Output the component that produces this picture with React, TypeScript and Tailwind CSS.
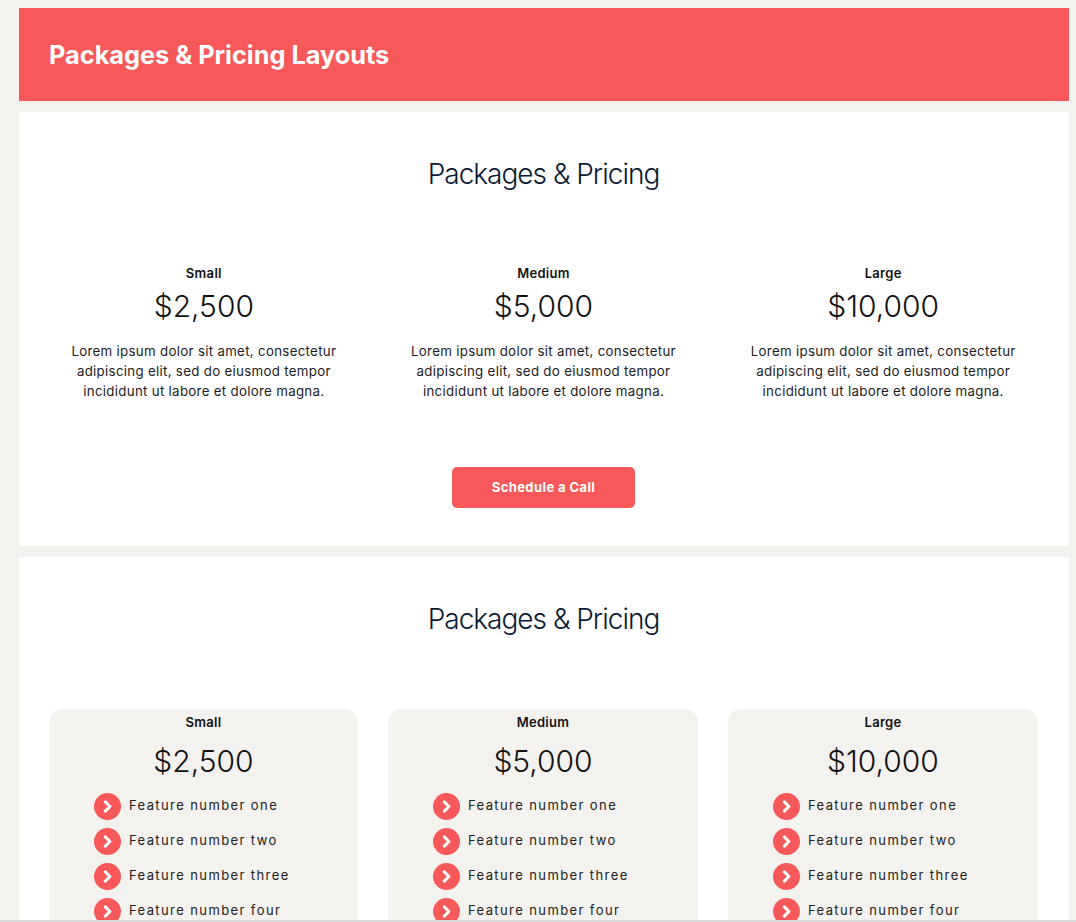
import React from 'react';

const tiers = [
  { name: 'Small', price: '$2,500' },
  { name: 'Medium', price: '$5,000' },
  { name: 'Large', price: '$10,000' },
];

const features = ['Feature number one', 'Feature number two', 'Feature number three', 'Feature number four'];

const Chevron: React.FC = () => (
  <span className="flex h-[27px] w-[27px] shrink-0 items-center justify-center rounded-full bg-[#f7595b]">
    <svg className="h-[13px] w-[13px]" viewBox="0 0 24 24" fill="none" stroke="#ffffff" strokeWidth="5.5" aria-hidden="true">
      <path strokeLinecap="round" strokeLinejoin="round" d="M8 3.5l8.5 8.5L8 20.5" />
    </svg>
  </span>
);

const SectionTitle: React.FC = () => (
  <h2 className="text-center font-['Inter',sans-serif] text-[28px] font-light leading-[40px] tracking-[-1px] text-[#0b1a33]">
    Packages &amp; Pricing
  </h2>
);

const App: React.FC = () => {
  return (
    <div className="flex h-[922px] flex-col overflow-hidden border-b-2 border-[#d9d9d9] bg-[#f4f2ee] pl-[19px] pr-[7px] pt-2 font-['Inter',sans-serif] text-[#111111]">
      {/* Banner */}
      <header className="flex h-[93px] shrink-0 items-center bg-[#f7595b] px-[30px]">
        <h1 className="text-[25.3px] font-bold leading-none text-white">Packages &amp; Pricing Layouts</h1>
      </header>

      {/* Plain layout */}
      <section className="mt-[11px] h-[434px] shrink-0 bg-white pl-[30px] pr-[31px] pt-[42px]">
        <SectionTitle />
        <div className="mt-[69px] grid grid-cols-3 gap-[30px]">
          {tiers.map((tier) => (
            <div key={tier.name} className="text-center">
              <div className="text-[13px] font-semibold leading-5 tracking-[0.3px]">{tier.name}</div>
              <div className="mt-[3px] text-[30px] font-light leading-[40px]">{tier.price}</div>
              <p className="mx-auto mt-[15px] w-[290px] text-[13.3px] leading-5 tracking-[0.3px] text-[#1c1c24]">
                Lorem ipsum dolor sit amet, consectetur adipiscing elit, sed do eiusmod tempor incididunt ut labore et dolore magna.
              </p>
            </div>
          ))}
        </div>
        <div className="mt-[66px] flex justify-center">
          <button className="h-[41px] w-[183px] rounded-[5px] bg-[#f7595b] text-[13px] font-bold tracking-[0.4px] text-white">
            Schedule a Call
          </button>
        </div>
      </section>

      {/* Card layout */}
      <section className="mt-[11px] min-h-0 flex-1 overflow-hidden bg-white pl-[30px] pr-[31px] pt-[42px]">
        <SectionTitle />
        <div className="mt-[70px] grid grid-cols-[309px_310px_310px] gap-[30px]">
          {tiers.map((tier) => (
            <div key={tier.name} className="h-[300px] rounded-t-[14px] bg-[#f4f2ee]">
              <div className="pt-[3px] text-center text-[13px] font-semibold leading-5 tracking-[0.3px]">{tier.name}</div>
              <div className="mt-[9px] text-center text-[30px] font-light leading-[40px]">{tier.price}</div>
              <ul className="mt-[12px] flex flex-col gap-2 pl-[45px]">
                {features.map((feature) => (
                  <li key={feature} className="flex h-[27px] items-center gap-2">
                    <Chevron />
                    <span className="-translate-y-px text-[13px] tracking-[1.4px] text-[#222222]">{feature}</span>
                  </li>
                ))}
              </ul>
            </div>
          ))}
        </div>
      </section>
    </div>
  );
};

export default App;
